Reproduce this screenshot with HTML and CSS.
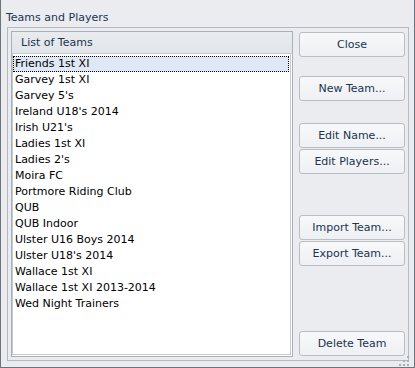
FILE: index.html
```html
<!DOCTYPE html>
<html lang="en">
<head>
    <meta charset="UTF-8">
    <title>Teams and Players</title>
    <link rel="stylesheet" href="styles.css">
</head>
<body>
    <div class="window">
        <div class="title">Teams and Players</div>
        <div class="group">
            <div class="list-panel">
                <div class="list-header">List of Teams</div>
                <div class="list-box">
                    <div class="row selected">Friends 1st XI</div>
                    <div class="row">Garvey 1st XI</div>
                    <div class="row">Garvey 5's</div>
                    <div class="row">Ireland U18's 2014</div>
                    <div class="row">Irish U21's</div>
                    <div class="row">Ladies 1st XI</div>
                    <div class="row">Ladies 2's</div>
                    <div class="row">Moira FC</div>
                    <div class="row">Portmore Riding Club</div>
                    <div class="row">QUB</div>
                    <div class="row">QUB Indoor</div>
                    <div class="row">Ulster U16 Boys 2014</div>
                    <div class="row">Ulster U18's 2014</div>
                    <div class="row">Wallace 1st XI</div>
                    <div class="row">Wallace 1st XI 2013-2014</div>
                    <div class="row">Wed Night Trainers</div>
                </div>
            </div>
            <div class="buttons">
                <button class="btn btn-close">Close</button>
                <button class="btn btn-new">New Team...</button>
                <button class="btn btn-edit">Edit Name...</button>
                <button class="btn btn-players">Edit Players...</button>
                <button class="btn btn-import">Import Team...</button>
                <button class="btn btn-export">Export Team...</button>
                <button class="btn btn-delete">Delete Team</button>
            </div>
        </div>
        <div class="grip">
            <span></span><span></span><span></span><span></span><span></span><span></span>
        </div>
    </div>
</body>
</html>
```

FILE: styles.css
```css
body {
    margin: 0;
    padding: 0;
    background-color: #eaecef;
    font-family: "DejaVu Sans", sans-serif;
    font-size: 11px;
}
.window {
    position: relative;
    width: 415px;
    height: 368px;
    box-sizing: border-box;
    border: 1px solid #6d747b;
    border-top: none;
    background-color: #eaecef;
    padding: 0 5px 6px 6px;
    display: flex;
    flex-direction: column;
}
.title {
    height: 27px;
    line-height: 36px;
    margin-left: -1px;
    color: #20344f;
    flex: none;
}
.group {
    flex: 1;
    border: 1px solid #b5bac1;
    padding: 3px;
    display: flex;
    gap: 6px;
    min-height: 0;
}
.list-panel {
    width: 282px;
    box-sizing: border-box;
    border: 1px solid #a9b0b8;
    display: flex;
    flex-direction: column;
    background-color: #ffffff;
}
.list-header {
    height: 21px;
    line-height: 21px;
    padding-left: 9px;
    color: #20344f;
    background: linear-gradient(#e9ecef, #e2e5e9);
    border-bottom: 1px solid #c6cbd1;
    flex: none;
}
.list-box {
    flex: 1;
    border: 1px solid #c4c9cf;
    border-top: none;
    margin: 0 1px 1px 0;
    padding-top: 2px;
}
.row {
    height: 16px;
    line-height: 16px;
    padding-left: 2px;
    color: #000000;
    box-sizing: border-box;
}
.row.selected {
    background-color: #dfe9f5;
    outline: 1px dotted #000000;
    outline-offset: -1px;
    margin-right: 1px;
}
.buttons {
    width: 106px;
    display: flex;
    flex-direction: column;
}
.btn {
    height: 25px;
    box-sizing: border-box;
    border: 1px solid #b9bec5;
    border-radius: 3px;
    background: linear-gradient(#f7f8fa, #eef0f3);
    color: #20344f;
    font-family: "DejaVu Sans", sans-serif;
    font-size: 11px;
    padding: 0;
    margin: 0;
}
.btn-close {
    margin-top: 1px;
}
.btn-new {
    margin-top: 19px;
}
.btn-edit {
    margin-top: 22px;
}
.btn-players {
    margin-top: 1px;
}
.btn-import {
    margin-top: 41px;
}
.btn-export {
    margin-top: 1px;
}
.btn-delete {
    margin-top: auto;
    margin-bottom: 1px;
}
.grip {
    position: absolute;
    right: 5px;
    bottom: 1px;
    width: 10px;
    height: 10px;
    display: grid;
    grid-template-columns: repeat(3, 2px);
    grid-template-rows: repeat(3, 2px);
    gap: 2px;
}
.grip span {
    background-color: #a8aeb5;
}
.grip span:nth-child(1) { grid-column: 3; grid-row: 1; }
.grip span:nth-child(2) { grid-column: 2; grid-row: 2; }
.grip span:nth-child(3) { grid-column: 3; grid-row: 2; }
.grip span:nth-child(4) { grid-column: 1; grid-row: 3; }
.grip span:nth-child(5) { grid-column: 2; grid-row: 3; }
.grip span:nth-child(6) { grid-column: 3; grid-row: 3; }
```
